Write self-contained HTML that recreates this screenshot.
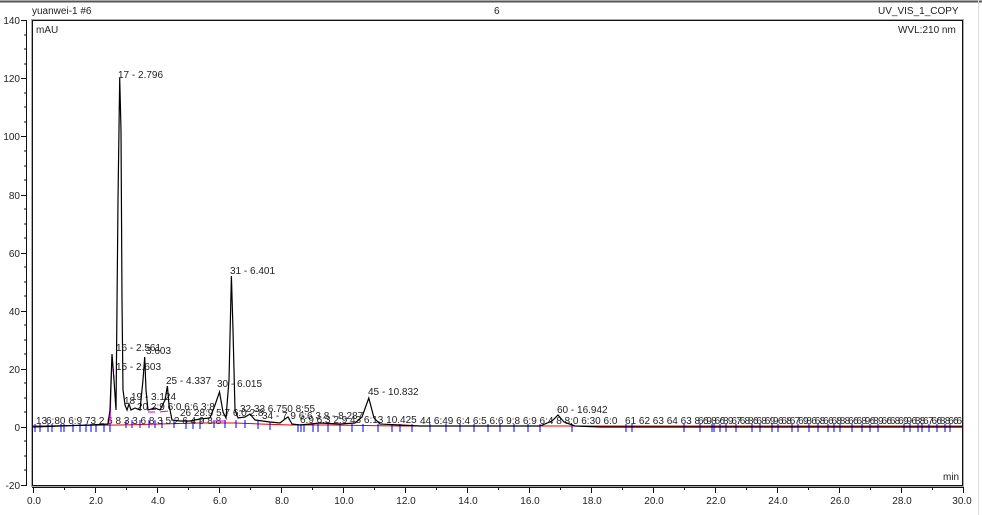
<!DOCTYPE html>
<html><head><style>
html,body{margin:0;padding:0;background:#fff;width:982px;height:515px;overflow:hidden}
svg{display:block}
text{font-family:"Liberation Sans",sans-serif;font-size:10px;fill:#222}
</style></head><body>
<svg width="982" height="515" xmlns="http://www.w3.org/2000/svg">
<defs><clipPath id="pc"><rect x="33" y="21" width="929" height="464"/></clipPath></defs>
<rect x="0" y="0" width="982" height="515" fill="#fff"/>
<line x1="0" y1="1.5" x2="982" y2="1.5" stroke="#555" stroke-width="2"/>
<line x1="978.5" y1="0" x2="978.5" y2="515" stroke="#ddd"/>
<rect x="31.5" y="19.5" width="932" height="467" fill="none" stroke="#aaa"/>
<rect x="32.5" y="20.5" width="930" height="465" fill="none" stroke="#111"/>
<text x="32" y="14">yuanwei-1 #6</text>
<text x="494" y="14">6</text>
<text x="878" y="14">UV_VIS_1_COPY</text>
<text x="36" y="33">mAU</text>
<text x="898" y="33">WVL:210 nm</text>
<text x="943" y="480">min</text>
<g stroke="#111">
<line x1="26.5" y1="20" x2="26.5" y2="486"/>
<line x1="21" y1="20.5" x2="27" y2="20.5"/><line x1="21" y1="78.5" x2="27" y2="78.5"/>
<line x1="21" y1="136.5" x2="27" y2="136.5"/><line x1="21" y1="195.5" x2="27" y2="195.5"/>
<line x1="21" y1="253.5" x2="27" y2="253.5"/><line x1="21" y1="311.5" x2="27" y2="311.5"/>
<line x1="21" y1="369.5" x2="27" y2="369.5"/><line x1="21" y1="427.5" x2="27" y2="427.5"/>
<line x1="21" y1="485.5" x2="27" y2="485.5"/>
</g>
<g text-anchor="end">
<text x="20" y="24">140</text><text x="20" y="82">120</text><text x="20" y="140">100</text>
<text x="20" y="199">80</text><text x="20" y="257">60</text><text x="20" y="315">40</text>
<text x="20" y="373">20</text><text x="20" y="431">0</text><text x="20" y="489">-20</text>
</g>
<g stroke="#111">
<line x1="24" y1="35" x2="27" y2="35"/><line x1="24" y1="49" x2="27" y2="49"/><line x1="24" y1="64" x2="27" y2="64"/>
<line x1="24" y1="93" x2="27" y2="93"/><line x1="24" y1="107" x2="27" y2="107"/><line x1="24" y1="122" x2="27" y2="122"/>
<line x1="24" y1="151" x2="27" y2="151"/><line x1="24" y1="166" x2="27" y2="166"/><line x1="24" y1="180" x2="27" y2="180"/>
<line x1="24" y1="209" x2="27" y2="209"/><line x1="24" y1="224" x2="27" y2="224"/><line x1="24" y1="238" x2="27" y2="238"/>
<line x1="24" y1="267" x2="27" y2="267"/><line x1="24" y1="282" x2="27" y2="282"/><line x1="24" y1="296" x2="27" y2="296"/>
<line x1="24" y1="325" x2="27" y2="325"/><line x1="24" y1="340" x2="27" y2="340"/><line x1="24" y1="354" x2="27" y2="354"/>
<line x1="24" y1="383" x2="27" y2="383"/><line x1="24" y1="398" x2="27" y2="398"/><line x1="24" y1="412" x2="27" y2="412"/>
<line x1="24" y1="441" x2="27" y2="441"/><line x1="24" y1="456" x2="27" y2="456"/><line x1="24" y1="470" x2="27" y2="470"/>
</g>
<line x1="32" y1="487.5" x2="964" y2="487.5" stroke="#111"/>
<g stroke="#111">
<line x1="33.5" y1="487" x2="33.5" y2="493"/><line x1="95.5" y1="487" x2="95.5" y2="493"/><line x1="157.5" y1="487" x2="157.5" y2="493"/>
<line x1="219.5" y1="487" x2="219.5" y2="493"/><line x1="281.5" y1="487" x2="281.5" y2="493"/><line x1="343.5" y1="487" x2="343.5" y2="493"/>
<line x1="405.5" y1="487" x2="405.5" y2="493"/><line x1="467.5" y1="487" x2="467.5" y2="493"/><line x1="529.5" y1="487" x2="529.5" y2="493"/>
<line x1="591.5" y1="487" x2="591.5" y2="493"/><line x1="653.5" y1="487" x2="653.5" y2="493"/><line x1="715.5" y1="487" x2="715.5" y2="493"/>
<line x1="777.5" y1="487" x2="777.5" y2="493"/><line x1="839.5" y1="487" x2="839.5" y2="493"/><line x1="901.5" y1="487" x2="901.5" y2="493"/>
<line x1="963.5" y1="487" x2="963.5" y2="493"/>
<line x1="64.5" y1="487" x2="64.5" y2="490"/><line x1="126.5" y1="487" x2="126.5" y2="490"/><line x1="188.5" y1="487" x2="188.5" y2="490"/>
<line x1="250.5" y1="487" x2="250.5" y2="490"/><line x1="312.5" y1="487" x2="312.5" y2="490"/><line x1="374.5" y1="487" x2="374.5" y2="490"/>
<line x1="436.5" y1="487" x2="436.5" y2="490"/><line x1="498.5" y1="487" x2="498.5" y2="490"/><line x1="560.5" y1="487" x2="560.5" y2="490"/>
<line x1="622.5" y1="487" x2="622.5" y2="490"/><line x1="684.5" y1="487" x2="684.5" y2="490"/><line x1="746.5" y1="487" x2="746.5" y2="490"/>
<line x1="808.5" y1="487" x2="808.5" y2="490"/><line x1="870.5" y1="487" x2="870.5" y2="490"/><line x1="932.5" y1="487" x2="932.5" y2="490"/>
</g>
<g text-anchor="middle">
<text x="34" y="504">0.0</text><text x="96" y="504">2.0</text><text x="158" y="504">4.0</text><text x="220" y="504">6.0</text>
<text x="282" y="504">8.0</text><text x="344" y="504">10.0</text><text x="406" y="504">12.0</text><text x="468" y="504">14.0</text>
<text x="530" y="504">16.0</text><text x="592" y="504">18.0</text><text x="654" y="504">20.0</text><text x="716" y="504">22.0</text>
<text x="778" y="504">24.0</text><text x="840" y="504">26.0</text><text x="902" y="504">28.0</text><text x="962" y="504">30.0</text>
</g>
<g clip-path="url(#pc)">
<polyline fill="none" stroke="#e00" stroke-width="1" points="33,426 120,425 160,424 200,423 235,423 260,424 290,425 330,425 400,426 700,426 962,426"/>
<g stroke="#00f" stroke-width="1">
<path d="M35 424v8M40 424v8M48 424v8M52 424v8M61 424v8M64 424v8M73 424v8M80 424v8M86 424v8M91 424v8M96 424v8M104 424v8M110 424v8M126 420v8M132 420v8M140 420v8M149 420v8M155 420v8M162 420v8M174 420v8M186 421v8M193 421v8M200 421v8M214 420v8M225 420v8M236 420v8M245 420v8M258 421v8M270 422v8M298 424v8M301 424v8M304 424v8M313 424v8M318 424v8M328 424v8M340 424v8M352 424v8M363 424v8M378 424v8M392 424v8M400 424v8M412 424v8M430 424v8M446 424v8M460 424v8M474 424v8M488 424v8M500 424v8M514 424v8M528 424v8M540 424v8M572 424v8M626 424v8M632 424v8M684 424v8M700 424v8M712 424v8M714 424v8M720 424v8M726 424v8M736 424v8M752 424v8M760 424v8M772 424v8M778 424v8M792 424v8M798 424v8M809 424v8M818 424v8M828 424v8M834 424v8M840 424v8M852 424v8M862 424v8M870 424v8M878 424v8M904 424v8M910 424v8M918 424v8M922 424v8M929 424v8M937 424v8M945 424v8M950 424v8"/>
</g>
<g font-size="9" fill="#223">
<text x="36" y="424">13</text><text x="46" y="424">6:80 6:9 73 2 6 8 3 3 6 8 3 5 2 6 4 9 8 8</text>
<text x="124" y="404" fill="#116">18</text><text x="131" y="400">19 - 3.124</text><text x="137" y="410">20 2:9 6:0 6:6 3:8</text>
<text x="180" y="416">26 28:9 5:7 6:0 2:8</text>
<text x="240" y="412">32 33 6.750 8:55</text><text x="262" y="419">34 - 7.9 6:6 3 8 - 8.287</text>
<text x="300" y="423" fill="#155">6:9 6:3 2:9</text><text x="350" y="423">43 6:13 10.425</text>
<text x="420" y="424">44 6:49 6:4 6:5 6:6 9:8 6:9 6:4 8 8:0 6:30 6:0</text>
<text x="625" y="424">61 62 63 64 63 8 6 8 6 9 7 8 6 8 9 6 8 7 9 6 8 6 8 8 6 8 6 9 6 8 9 6 8 7 6 8 6 6 8 9 6 8 6 8 6 8 6 8</text>
<text x="698" y="424">6:9 6:8 6:6 8:6 6:9 6:6 6:8 6:6 6:8 6:6 9:8 6:6 6:9 8:6 6:8 6:6 9:6 6:8 6:6 9:6 6:8 6:6 8:6 6:9 6:8 6:6</text>
</g>
<path d="M110 424 L112 356 L114 380" stroke="#d0d" fill="none"/>
<path d="M148 412 L155 412 M160 412 L168 411 M215 421 L226 421" stroke="#d0d" fill="none"/>
<polyline fill="none" stroke="#000" stroke-width="1.2" points="33,427 60,426 90,425 108,424 110,410 112,354 114,380 116,410 118,200 119.7,78 121,130 122,300 123,390 125,405 127,410 129,404 131,410 135,408 140,410 143,380 144.7,357 146,390 148,410 155,408 160,410 165,400 167.4,386 169,405 172,420 180,421 190,421 200,419 210,418 215,405 219.5,392 223,412 226,418 229,380 231.4,276 233,330 235,410 238,418 245,417 250,414 255,420 270,422 280,423 285,419 288,417 292,424 300,425 320,423 340,424 355,423 362,417 368.8,398 374,418 380,424 400,425 420,426 540,426 552,421 558,415 564,422 575,426 600,427 962,427"/>
</g>
<g>
<text x="118" y="78">17 - 2.796</text>
<text x="116" y="351">16 - 2.561</text>
<text x="146" y="354">3.603</text>
<text x="116" y="370">15 - 2.603</text>
<text x="166" y="384">25 - 4.337</text>
<text x="217" y="387">30 - 6.015</text>
<text x="230" y="274">31 - 6.401</text>
<text x="368" y="395">45 - 10.832</text>
<text x="557" y="413">60 - 16.942</text>
</g>
</svg>
</body></html>
